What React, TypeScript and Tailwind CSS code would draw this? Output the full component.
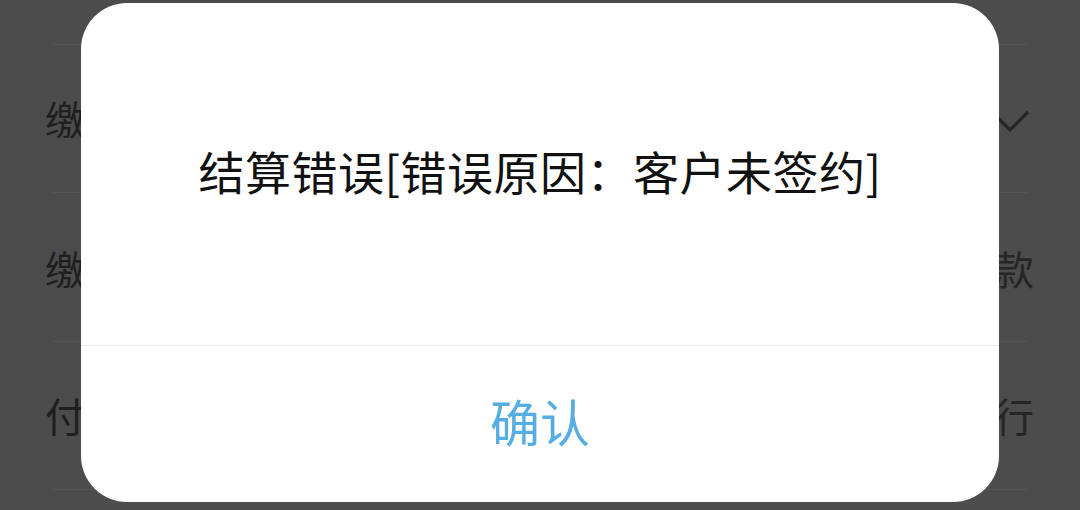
import React from "react";

const font = { fontFamily: '"Noto Sans CJK SC", "Noto Sans", sans-serif' };

export default function App() {
  return (
    <div
      className="relative w-[1080px] h-[510px] overflow-hidden bg-[#4c4c4c]"
      style={font}
    >
      {/* background page (dimmed) */}
      <div className="flex flex-col">
        <div className="h-[45px] mx-[53px] border-b border-[#555555]" />
        <div className="h-[148px] mx-[53px] border-b border-[#555555]" />
        <div className="h-[149px] mx-[53px] border-b border-[#555555]" />
        <div className="h-[148px] mx-[53px] border-b border-[#555555]" />
      </div>
      <div className="absolute inset-0 flex flex-col">
        <div className="h-[46px]" />
        <div className="h-[148px] flex items-center justify-between pl-[45px] pr-[49px] text-[40px] text-[#1f1f1f]">
          <span className="-mt-[4px]">缴费方式</span>
          <svg width="42" height="26" viewBox="0 0 42 26" className="mt-[4px]">
            <path d="M3 3 L21 21 L39 3" fill="none" stroke="#262626" strokeWidth="3.2" />
          </svg>
        </div>
        <div className="h-[149px] flex items-center justify-between pl-[45px] pr-[46px] text-[40px] text-[#1f1f1f]">
          <span className="-mt-[2px]">缴费类型</span>
          <span className="-mt-[2px] text-[#262626]">预缴款</span>
        </div>
        <div className="h-[148px] flex items-center justify-between pl-[45px] pr-[46px] text-[40px] text-[#1f1f1f]">
          <span className="-mt-[4px]">付款银行</span>
          <span className="-mt-[4px] text-[#262626]">建设银行</span>
        </div>
      </div>

      {/* dialog */}
      <div className="absolute left-[81px] top-[3px] w-[918px] h-[499px] bg-white rounded-[46px] flex flex-col overflow-hidden">
        <div className="h-[342px] flex items-center justify-center">
          <span className="text-[46px] text-[#111111] leading-none -mt-[8px] tracking-[0.5px]">
            结算错误[错误原因：客户未签约]
          </span>
        </div>
        <div className="h-px bg-[#ececec]" />
        <div className="flex-1 flex items-center justify-center">
          <span className="text-[50px] text-[#55ade3] leading-none -mt-[8px]">确认</span>
        </div>
      </div>
    </div>
  );
}
